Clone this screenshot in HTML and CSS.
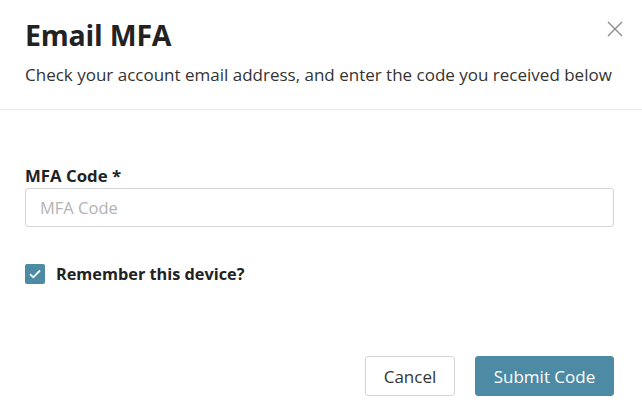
FILE: index.html
```html
<!DOCTYPE html>
<html>
<head>
<meta charset="utf-8">
<link rel="stylesheet" href="styles.css">
</head>
<body>
<div class="modal">
  <div class="header">
    <div class="title-row">
      <h1 class="title">Email MFA</h1>
      <button class="close" aria-label="Close">
        <svg width="16" height="16" viewBox="0 0 16 16"><path d="M1 1L15 15M15 1L1 15" stroke="#8a8a8a" stroke-width="1.4" fill="none"/></svg>
      </button>
    </div>
    <p class="subtitle">Check your account email address, and enter the code you received below</p>
  </div>
  <div class="body">
    <label class="label" for="code">MFA Code *</label>
    <input class="input" id="code" type="text" placeholder="MFA Code">
    <label class="check">
      <span class="box"><svg width="12" height="10" viewBox="0 0 12 10"><path d="M1 5.2L4.3 8.3L11 1.5" stroke="#fff" stroke-width="1.8" fill="none"/></svg></span>
      <span class="check-text">Remember this device?</span>
    </label>
  </div>
  <div class="footer">
    <button class="btn btn-cancel">Cancel</button>
    <button class="btn btn-submit">Submit Code</button>
  </div>
</div>
</body>
</html>
```
FILE: styles.css
```css
* { box-sizing: border-box; }
html, body { margin: 0; padding: 0; background: #fff; }
body { font-family: "Open Sans", "Noto Sans", sans-serif; color: #222; }
.modal { width: 642px; height: 417px; display: flex; flex-direction: column; }
.header { padding: 16px 24px 0 25px; border-bottom: 1px solid #e8e8e8; height: 110px; }
.title-row { display: flex; justify-content: space-between; align-items: flex-start; }
.title { margin: 0; font-size: 28.5px; font-weight: 700; line-height: 38px; color: #222; letter-spacing: -0.2px; }
.close { border: 0; background: none; padding: 0; margin: 5px -5px 0 0; width: 16px; height: 16px; cursor: pointer; }
.close svg { display: block; }
.subtitle { margin: 9px 0 0; font-size: 17px; line-height: 24px; color: #333; }
.body { padding: 54px 28px 0 25px; display: flex; flex-direction: column; }
.label { font-size: 16.8px; font-weight: 700; line-height: 24px; color: #222; }
.input { margin-top: 0; height: 39px; width: 589px; border: 1px solid #d6d6d6; border-radius: 3px; padding: 0 14px; font: inherit; font-size: 16.5px; color: #333; }
.input::placeholder { color: #b3b3b3; }
.check { margin-top: 36px; display: flex; align-items: center; gap: 11px; }
.box { width: 20px; height: 20px; background: #4d8aa3; border-radius: 2px; display: flex; align-items: center; justify-content: center; }
.check-text { font-size: 16.3px; font-weight: 700; color: #222; }
.footer { margin-top: auto; padding: 0 28px 21px 0; display: flex; justify-content: flex-end; gap: 20px; }
.btn { font: inherit; font-size: 17px; height: 40px; border-radius: 3px; cursor: pointer; }
.btn-cancel { width: 90px; background: #fff; border: 1px solid #d6d6d6; color: #333; }
.btn-submit { width: 139px; background: #4d8aa3; border: 1px solid #4d8aa3; color: #fff; }
```
